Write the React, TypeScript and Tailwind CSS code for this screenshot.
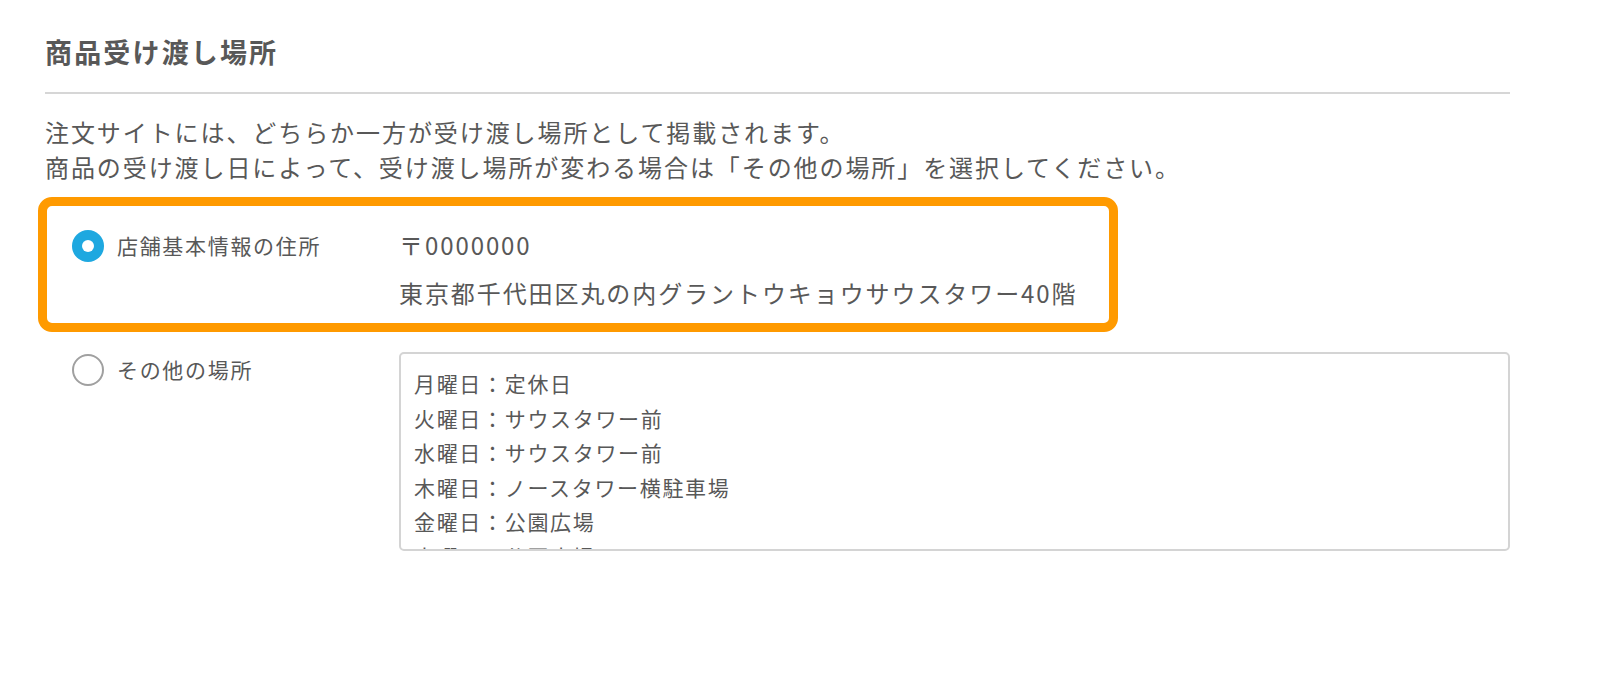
const scheduleLines = [
  "月曜日：定休日",
  "火曜日：サウスタワー前",
  "水曜日：サウスタワー前",
  "木曜日：ノースタワー横駐車場",
  "金曜日：公園広場",
  "土曜日：公園広場",
]

function RadioDot({ checked }: { checked: boolean }) {
  if (checked) {
    return (
      <span className="flex size-8 shrink-0 items-center justify-center rounded-full bg-[#1ea8e0]">
        <span className="block size-3 rounded-full bg-white" />
      </span>
    )
  }
  return <span className="block size-8 shrink-0 rounded-full border-2 border-[#a0a0a0] bg-white" />
}

export default function App() {
  return (
    <div className="min-h-[680px] bg-white pt-8 pr-[90px] pl-[45px] font-['Noto_Sans_CJK_JP','Noto_Sans',sans-serif] text-[#585858]">
      <h2 className="text-[27px] leading-10 font-bold tracking-[0.08em]">商品受け渡し場所</h2>
      <div className="mt-5 h-[2px] bg-[#d6d6d6]" />

      <p className="mt-5 text-[24px] leading-[35px] tracking-[0.08em]">
        注文サイトには、どちらか一方が受け渡し場所として掲載されます。
        <br />
        商品の受け渡し日によって、受け渡し場所が変わる場合は「その他の場所」を選択してください。
      </p>

      <div className="relative mt-[13px] flex items-start pt-6 pb-[15px]">
        <div className="ml-[27px] mt-[9px]">
          <RadioDot checked />
        </div>
        <span className="ml-[13px] w-[282px] shrink-0 text-[21px] leading-[48px] tracking-[0.08em]">
          店舗基本情報の住所
        </span>
        <div className="text-[24px] leading-[48px] tracking-[0.08em]">
          <div>〒0000000</div>
          <div>東京都千代田区丸の内グラントウキョウサウスタワー40階</div>
        </div>
        <div className="pointer-events-none absolute top-0 left-[-7px] h-full w-[1080px] rounded-[14px] border-[9px] border-[#ff9a00]" />
      </div>

      <div className="mt-5 flex items-start">
        <div className="ml-[27px] mt-[2px]">
          <RadioDot checked={false} />
        </div>
        <span className="ml-[13px] w-[282px] shrink-0 text-[21px] leading-[34px] tracking-[0.08em]">
          その他の場所
        </span>
        <div className="h-[199px] flex-1 overflow-hidden rounded-[5px] border-2 border-[#d4d4d4] px-[13px] pt-[12px] text-[21px] leading-[34.5px] tracking-[0.08em]">
          {scheduleLines.map((line, i) => (
            <div key={i}>{line}</div>
          ))}
        </div>
      </div>
    </div>
  )
}
